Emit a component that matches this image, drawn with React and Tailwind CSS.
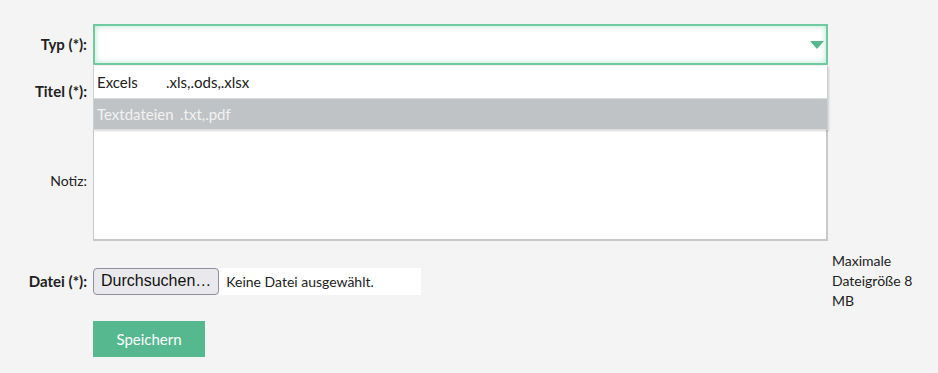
import React from 'react';

const Label = ({ children, bold }) => (
  <div className={`w-[87px] text-right text-[#222] ${bold ? 'font-bold text-[15px]' : 'text-[14px]'}`}>{children}</div>
);

const App = () => {
  return (
    <div className="relative w-[938px] h-[373px] bg-[#f4f4f4] font-['Lato',sans-serif] text-[#222] overflow-hidden">
      <div className="flex flex-col pt-[24px]">
        {/* Typ */}
        <div className="flex items-center gap-[6px]">
          <Label bold>Typ (*):</Label>
          <div className="relative w-[735px] h-[41px] bg-white border-2 border-[#6fcaa0] shadow-[inset_0_0_6px_rgba(95,196,150,0.45)]">
            <svg className="absolute right-[2px] top-[15px]" width="14" height="8" viewBox="0 0 14 8">
              <polygon points="0,0 14,0 7,8" fill="#55b88f" />
            </svg>
          </div>
        </div>

        {/* Titel */}
        <div className="flex items-center gap-[6px] mt-[8px]">
          <Label bold>Titel (*):</Label>
          <div className="w-[735px] h-[36px] bg-white border border-[#ccc]" />
        </div>

        {/* Notiz */}
        <div className="flex items-center gap-[6px] mt-[11px]">
          <Label>Notiz:</Label>
          <div className="w-[735px] h-[121px] bg-white border border-[#c8c8c8] border-b-2 border-r-2" />
        </div>

        {/* Datei */}
        <div className="flex items-center mt-[10px]">
          <div className="flex items-center gap-[6px] w-[832px]">
            <Label bold>Datei (*):</Label>
            <div className="flex items-center h-[27px]">
              <div className="h-[27px] px-[7px] flex items-center bg-[#e9e9ed] border border-[#8f8f9d] rounded-[4px] font-['Liberation_Sans',sans-serif] text-[16px] text-[#111]">
                Durchsuchen…
              </div>
              <div className="h-[27px] w-[202px] bg-white flex items-center pl-[7px] text-[14px] text-[#222]">
                Keine Datei ausgewählt.
              </div>
            </div>
          </div>
          <div className="w-[90px] text-[14px] leading-[20px] text-[#222]">
            Maximale Dateigröße 8 MB
          </div>
        </div>

        {/* Speichern */}
        <div className="pl-[93px] mt-[10px]">
          <button className="w-[112px] h-[36px] bg-[#55b88f] text-white text-[15px]">Speichern</button>
        </div>
      </div>

      {/* open dropdown */}
      <div className="absolute left-[93px] top-[66px] w-[735px] bg-white border-x border-[#cfcfcf] shadow-[1px_1px_2px_rgba(0,0,0,0.15)]">
        <div className="h-[32px] flex items-center px-[3px] text-[15px] text-[#222]">
          <span className="w-[69px]">Excels</span>
          <span>.xls,.ods,.xlsx</span>
        </div>
        <div className="h-[32px] flex items-center px-[3px] text-[15px] text-[#f2f2f2] bg-[#bfc3c6] border-y border-[#d9dbdd]">
          <span className="w-[83px]">Textdateien</span>
          <span>.txt,.pdf</span>
        </div>
      </div>
    </div>
  );
};

export default App;
